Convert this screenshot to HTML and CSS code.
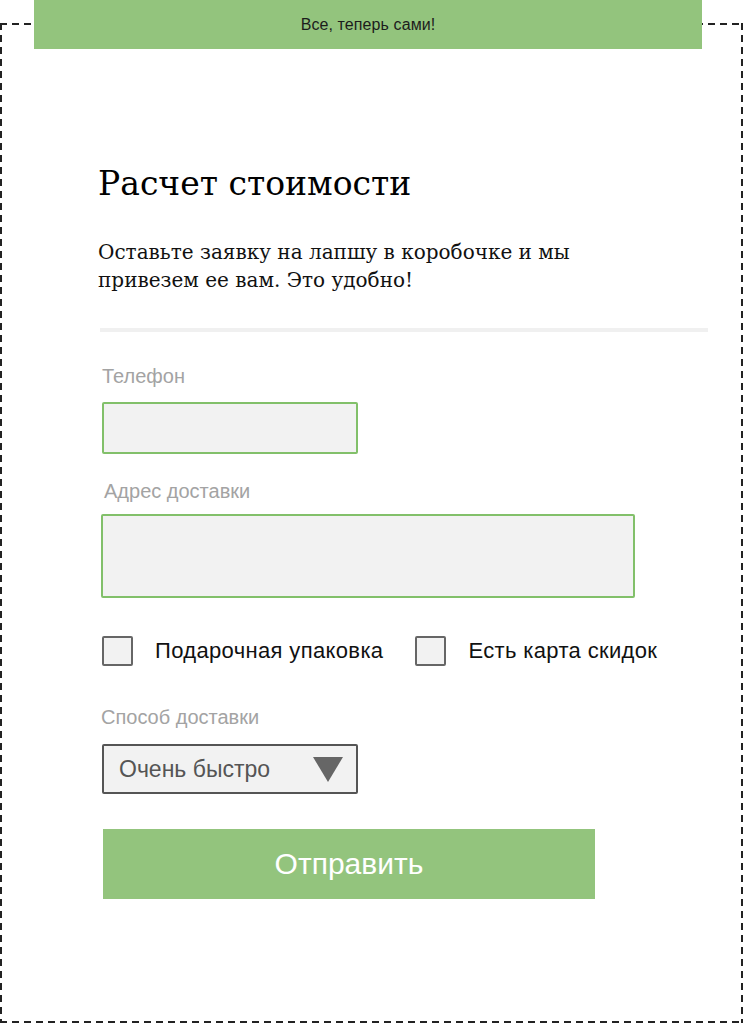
FILE: index.html
```html
<!DOCTYPE html>
<html lang="ru">
<head>
<meta charset="utf-8">
<title>Расчет стоимости</title>
<link rel="stylesheet" href="styles.css">
</head>
<body>
<div class="page">
  <div class="banner">Все, теперь сами!</div>
  <div class="frame">
    <h1 class="title">Расчет стоимости</h1>
    <p class="lead">Оставьте заявку на лапшу в коробочке и мы привезем ее вам. Это удобно!</p>
    <div class="divider"></div>
    <form class="form">
      <label class="field-label field-label--phone">Телефон</label>
      <div class="input input--phone"></div>
      <label class="field-label field-label--address">Адрес доставки</label>
      <div class="input input--address"></div>
      <div class="checks">
        <div class="check"><span class="box"></span><span class="check-text">Подарочная упаковка</span></div>
        <div class="check"><span class="box"></span><span class="check-text">Есть карта скидок</span></div>
      </div>
      <label class="field-label field-label--method">Способ доставки</label>
      <div class="select"><span class="select-text">Очень быстро</span><span class="arrow"></span></div>
      <div class="submit">Отправить</div>
    </form>
  </div>
</div>
</body>
</html>
```
FILE: styles.css
```css
* { box-sizing: border-box; }
html, body { margin: 0; padding: 0; background: #ffffff; }
body { font-family: "Liberation Sans", Arial, sans-serif; }

.page { position: relative; width: 743px; height: 1024px; padding-top: 23px; }

.banner {
  position: absolute;
  top: 0;
  left: 34px;
  width: 668px;
  height: 49px;
  background: #93c47d;
  color: #1c1c1c;
  font-size: 16px;
  letter-spacing: 0.1px;
  display: flex;
  align-items: center;
  justify-content: center;
}

.frame {
  height: 1000px;
  width: 743px;
  padding: 141px 35px 0 98px;
  background-image:
    repeating-linear-gradient(90deg, #222 0 7px, transparent 7px 12px),
    repeating-linear-gradient(90deg, #222 0 7px, transparent 7px 12px),
    repeating-linear-gradient(180deg, #222 0 7px, transparent 7px 12px),
    repeating-linear-gradient(180deg, #222 0 7px, transparent 7px 12px);
  background-size: 100% 2px, 100% 2px, 2px 100%, 2px 100%;
  background-position: 0 0, 0 100%, 0 0, 100% 0;
  background-repeat: no-repeat;
}

.title {
  margin: 0;
  font-family: "DejaVu Serif", "Liberation Serif", serif;
  font-weight: normal;
  font-size: 33px;
  line-height: 40px;
  color: #000;
}

.lead {
  margin: 34px 0 0 0;
  max-width: 500px;
  font-family: "DejaVu Serif", "Liberation Serif", serif;
  font-size: 20px;
  line-height: 28px;
  color: #111;
}

.divider {
  margin-top: 34px;
  margin-left: 2px;
  height: 4px;
  background: #f0f0f0;
}

.form { display: flex; flex-direction: column; align-items: flex-start; padding-left: 2px; }

.field-label {
  color: #a3a3a3;
  font-size: 20px;
  line-height: 22px;
  padding-left: 2px;
}
.field-label--phone { margin-top: 33px; }
.field-label--address { margin-top: 26px; padding-left: 4px; }
.field-label--method { margin-top: 40px; padding-left: 1px; }

.input {
  background: #f2f2f2;
  border: 2px solid #82c06a;
  border-radius: 2px;
}
.input--phone { margin: 15px 0 0 2px; width: 256px; height: 52px; }
.input--address { margin: 12px 0 0 1px; width: 534px; height: 84px; }

.checks { display: flex; gap: 32px; margin: 38px 0 0 2px; }
.check { display: flex; align-items: center; gap: 22px; }
.box {
  width: 31px; height: 30px;
  background: #f2f2f2;
  border: 2px solid #666;
  border-radius: 2px;
}
.check-text { font-size: 22px; letter-spacing: 0.35px; color: #111; }

.select {
  margin: 16px 0 0 2px;
  width: 256px; height: 50px;
  background: #f2f2f2;
  border: 2px solid #555;
  border-radius: 2px;
  display: flex; align-items: center; justify-content: space-between;
  padding: 0 13px 0 15px;
}
.select-text { font-size: 23px; color: #555; }
.arrow {
  width: 0; height: 0;
  border-left: 15px solid transparent;
  border-right: 15px solid transparent;
  border-top: 25px solid #666;
}

.submit {
  margin: 35px 0 0 3px;
  width: 492px; height: 70px;
  background: #93c47d;
  color: #fff;
  font-size: 30px;
  display: flex; align-items: center; justify-content: center;
}
```
